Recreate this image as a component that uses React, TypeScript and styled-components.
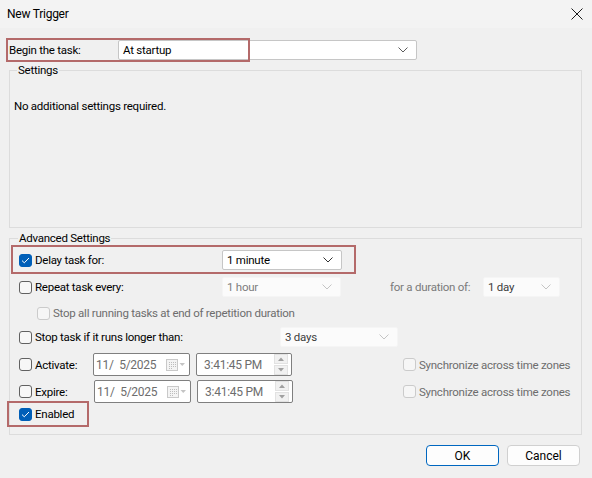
import styled, { createGlobalStyle } from 'styled-components';

const GlobalStyle = createGlobalStyle`
  html, body {
    margin: 0;
    padding: 0;
    background: #f0f0f0;
  }
  body {
    font-family: Roboto, "Noto Sans", "Liberation Sans", sans-serif;
    font-size: 11.5px;
    letter-spacing: -0.25px;
    color: #000;
  }
`;

const Window = styled.div`
  position: relative;
  width: 592px;
  height: 478px;
  background: #f0f0f0;
  display: flex;
  flex-direction: column;
  overflow: hidden;
`;

const TitleBar = styled.div`
  height: 28px;
  background: #f3f3f3;
  display: flex;
  align-items: center;
  justify-content: space-between;
  padding: 0 9px 0 7px;
  font-size: 12px;
`;

const Body = styled.div`
  padding: 0 10px 0 9px;
  display: flex;
  flex-direction: column;
`;

const Row = styled.div<{ $mt?: number; $h?: number; $indent?: number }>`
  display: flex;
  align-items: center;
  height: ${(p) => p.$h ?? 20}px;
  margin-top: ${(p) => p.$mt ?? 0}px;
  padding-left: ${(p) => p.$indent ?? 0}px;
  white-space: nowrap;
`;

const FieldLabel = styled.span<{ $w: number; $muted?: boolean }>`
  width: ${(p) => p.$w}px;
  flex: none;
  color: ${(p) => (p.$muted ? '#7a7a7a' : '#000')};
`;

const Group = styled.div<{ $mt: number; $h: number }>`
  position: relative;
  margin-top: ${(p) => p.$mt}px;
  height: ${(p) => p.$h}px;
  border: 1px solid #dcdcdc;
  box-sizing: border-box;
  display: flex;
  flex-direction: column;
`;

const Legend = styled.span<{ $left: number }>`
  position: absolute;
  top: -9px;
  left: ${(p) => p.$left}px;
  padding: 0 1px;
  background: #f0f0f0;
  line-height: 16px;
`;

const Note = styled.div`
  padding: 27px 0 0 4px;
  line-height: 16px;
`;

const GroupRows = styled.div`
  padding: 11px 0 0 9px;
  display: flex;
  flex-direction: column;
`;

const Combo = styled.div<{ $w: number; $disabled?: boolean; $dim?: boolean }>`
  width: ${(p) => p.$w}px;
  height: 20px;
  box-sizing: border-box;
  flex: none;
  display: flex;
  align-items: center;
  justify-content: space-between;
  padding: 0 8px 0 4px;
  background: ${(p) => (p.$disabled ? '#fbfbfb' : '#fff')};
  border: 1px solid ${(p) => (p.$disabled ? '#f5f5f5' : '#c6c6c6')};
  border-radius: 2px;
  color: ${(p) => (p.$dim ? '#7d7d7d' : p.$disabled ? '#3c3c3c' : '#000')};
`;

const CheckLabel = styled.label<{ $w?: number; $disabled?: boolean }>`
  display: flex;
  align-items: center;
  gap: 3px;
  width: ${(p) => (p.$w ? `${p.$w}px` : 'auto')};
  flex: none;
  color: ${(p) => (p.$disabled ? '#6d6d6d' : '#000')};
`;

const Box = styled.span<{ $checked?: boolean; $disabled?: boolean }>`
  width: 13px;
  height: 13px;
  box-sizing: border-box;
  border-radius: 3px;
  flex: none;
  display: flex;
  align-items: center;
  justify-content: center;
  background: ${(p) => (p.$checked ? '#005fb8' : p.$disabled ? '#f6f6f6' : '#f7f7f7')};
  border: 1px solid
    ${(p) => (p.$checked ? '#005fb8' : p.$disabled ? '#cbcbcb' : '#616161')};
`;

const DateBox = styled.div<{ $w: number }>`
  width: ${(p) => p.$w}px;
  height: 23px;
  box-sizing: border-box;
  flex: none;
  display: flex;
  align-items: center;
  justify-content: space-between;
  background: #fff;
  border: 1px solid #7f7f7f;
  border-radius: 2px;
  color: #6d6d6d;
  font-size: 12px;
  padding: 0 3px 0 2px;
  margin-right: 6px;
`;

const TimeText = styled.span`
  padding-left: 5px;
`;

const Spinner = styled.div`
  display: flex;
  flex-direction: column;
  gap: 1px;
`;

const SpinBtn = styled.span`
  width: 12px;
  height: 8px;
  background: #f1f1f1;
  border: 1px solid #e2e2e2;
  display: flex;
  align-items: center;
  justify-content: center;
`;

const Highlight = styled.div`
  position: absolute;
  border: 2px solid #b46a6a;
  box-sizing: border-box;
  pointer-events: none;
`;

const Footer = styled.div`
  display: flex;
  justify-content: flex-end;
  gap: 8px;
  margin-top: 10px;
  padding-right: 2px;
`;

const Button = styled.button<{ $primary?: boolean }>`
  width: 73px;
  height: 21px;
  box-sizing: border-box;
  font: inherit;
  font-size: 12px;
  color: #000;
  background: #fdfdfd;
  border: 1px solid ${(p) => (p.$primary ? '#0067c0' : '#d0d0d0')};
  border-radius: 4px;
  padding: 0;
`;

function Chevron({ color = '#5c5c5c' }: { color?: string }) {
  return (
    <svg width="10" height="6" viewBox="0 0 10 6">
      <path d="M0.5 0.5 L5 5 L9.5 0.5" fill="none" stroke={color} strokeWidth="1" />
    </svg>
  );
}

function Check({ checked, disabled }: { checked?: boolean; disabled?: boolean }) {
  return (
    <Box $checked={checked} $disabled={disabled}>
      {checked && (
        <svg width="9" height="7" viewBox="0 0 9 7">
          <path d="M1 3.6 L3.3 5.8 L8 1" fill="none" stroke="#fff" strokeWidth="1" />
        </svg>
      )}
    </Box>
  );
}

function CalendarIcon() {
  return (
    <svg width="20" height="12" viewBox="0 0 20 12">
      <rect x="0.5" y="0.5" width="11" height="11" fill="#f4f4f4" stroke="#c9c9c9" />
      <path
        d="M3 3h1v1H3zM5 3h1v1H5zM7 3h1v1H7zM9 3h1v1H9zM3 5h1v1H3zM5 5h1v1H5zM7 5h1v1H7zM9 5h1v1H9zM3 7h1v1H3zM5 7h1v1H5zM7 7h1v1H7zM9 7h1v1H9zM3 9h1v1H3zM5 9h1v1H5z"
        fill="#bdbdbd"
      />
      <path d="M13.5 4 L19 4 L16.25 7 Z" fill="#c4c4c4" />
    </svg>
  );
}

function DatePicker() {
  return (
    <DateBox $w={97}>
      <span>11/&nbsp;&nbsp;5/2025</span>
      <CalendarIcon />
    </DateBox>
  );
}

function TimePicker() {
  return (
    <DateBox $w={96}>
      <TimeText>3:41:45 PM</TimeText>
      <Spinner>
        <SpinBtn>
          <svg width="6" height="4" viewBox="0 0 6 4">
            <path d="M0 4 L3 0.5 L6 4 Z" fill="#a0a0a0" />
          </svg>
        </SpinBtn>
        <SpinBtn>
          <svg width="6" height="4" viewBox="0 0 6 4">
            <path d="M0 0 L3 3.5 L6 0 Z" fill="#a0a0a0" />
          </svg>
        </SpinBtn>
      </Spinner>
    </DateBox>
  );
}

export default function App() {
  return (
    <Window>
      <GlobalStyle />
      <TitleBar>
        <span>New Trigger</span>
        <svg width="12" height="12" viewBox="0 0 12 12">
          <path d="M0.5 0.5 L11.5 11.5 M11.5 0.5 L0.5 11.5" stroke="#1a1a1a" strokeWidth="1" />
        </svg>
      </TitleBar>

      <Body>
        <Row $mt={12}>
          <FieldLabel $w={109}>Begin the task:</FieldLabel>
          <Combo $w={299}>
            <span>At startup</span>
            <Chevron />
          </Combo>
        </Row>

        <Group $mt={10} $h={158}>
          <Legend $left={7}>Settings</Legend>
          <Note>No additional settings required.</Note>
        </Group>

        <Group $mt={10} $h={197}>
          <Legend $left={8}>Advanced Settings</Legend>
          <GroupRows>
            <Row>
              <CheckLabel $w={203}>
                <Check checked />
                Delay task for:
              </CheckLabel>
              <Combo $w={120}>
                <span>1 minute</span>
                <Chevron color="#333" />
              </Combo>
            </Row>

            <Row $mt={7}>
              <CheckLabel $w={203}>
                <Check />
                Repeat task every:
              </CheckLabel>
              <Combo $w={119} $disabled $dim>
                <span>1 hour</span>
                <Chevron color="#c4c4c4" />
              </Combo>
              <FieldLabel $w={93} $muted style={{ marginLeft: 49 }}>
                for a duration of:
              </FieldLabel>
              <Combo $w={77} $disabled>
                <span>1 day</span>
                <Chevron color="#c4c4c4" />
              </Combo>
            </Row>

            <Row $mt={6} $indent={18}>
              <CheckLabel $disabled>
                <Check disabled />
                Stop all running tasks at end of repetition duration
              </CheckLabel>
            </Row>

            <Row $mt={4}>
              <CheckLabel $w={261}>
                <Check />
                Stop task if it runs longer than:
              </CheckLabel>
              <Combo $w={118} $disabled>
                <span>3 days</span>
                <Chevron color="#c4c4c4" />
              </Combo>
            </Row>

            <Row $mt={6} $h={23}>
              <CheckLabel $w={74}>
                <Check />
                Activate:
              </CheckLabel>
              <DatePicker />
              <TimePicker />
              <CheckLabel $disabled style={{ marginLeft: 105 }}>
                <Check disabled />
                Synchronize across time zones
              </CheckLabel>
            </Row>

            <Row $mt={4} $h={23}>
              <CheckLabel $w={75}>
                <Check />
                Expire:
              </CheckLabel>
              <DatePicker />
              <TimePicker />
              <CheckLabel $disabled style={{ marginLeft: 104 }}>
                <Check disabled />
                Synchronize across time zones
              </CheckLabel>
            </Row>

            <Row $mt={1}>
              <CheckLabel>
                <Check checked />
                Enabled
              </CheckLabel>
            </Row>
          </GroupRows>
        </Group>

        <Footer>
          <Button $primary>OK</Button>
          <Button>Cancel</Button>
        </Footer>
      </Body>

      <Highlight style={{ left: 6, top: 38, width: 244, height: 24 }} />
      <Highlight style={{ left: 11, top: 245, width: 345, height: 29 }} />
      <Highlight style={{ left: 7, top: 401, width: 82, height: 26 }} />
    </Window>
  );
}
